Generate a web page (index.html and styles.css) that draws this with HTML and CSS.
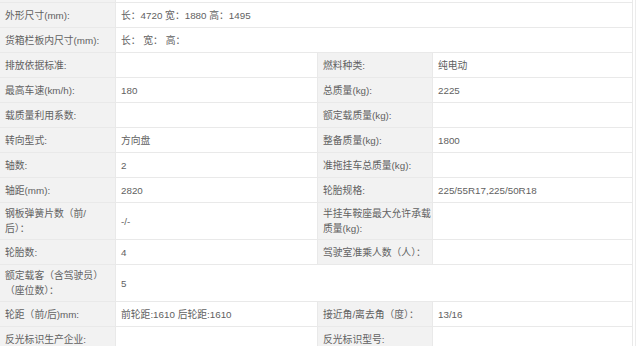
FILE: index.html
```html
<!DOCTYPE html>
<html lang="zh-CN">
<head>
<meta charset="utf-8">
<title>车辆参数</title>
<link rel="stylesheet" href="styles.css">
</head>
<body>
<div class="wrap">
<table class="spec">
  <colgroup>
    <col class="c-label1">
    <col class="c-val1">
    <col class="c-label2">
    <col class="c-val2">
  </colgroup>
  <tbody>
    <tr class="prev"><td class="lab lab1"></td><td class="val" colspan="3"></td></tr>
    <tr><td class="lab lab1">外形尺寸(mm):</td><td class="val" colspan="3">长：4720 宽：1880 高：1495</td></tr>
    <tr><td class="lab lab1">货箱栏板内尺寸(mm):</td><td class="val" colspan="3">长： 宽： 高：</td></tr>
    <tr><td class="lab lab1">排放依据标准:</td><td class="val"></td><td class="lab lab2">燃料种类:</td><td class="val">纯电动</td></tr>
    <tr><td class="lab lab1">最高车速(km/h):</td><td class="val">180</td><td class="lab lab2">总质量(kg):</td><td class="val">2225</td></tr>
    <tr><td class="lab lab1">载质量利用系数:</td><td class="val"></td><td class="lab lab2">额定载质量(kg):</td><td class="val"></td></tr>
    <tr><td class="lab lab1">转向型式:</td><td class="val">方向盘</td><td class="lab lab2">整备质量(kg):</td><td class="val">1800</td></tr>
    <tr><td class="lab lab1">轴数:</td><td class="val">2</td><td class="lab lab2">准拖挂车总质量(kg):</td><td class="val"></td></tr>
    <tr><td class="lab lab1">轴距(mm):</td><td class="val">2820</td><td class="lab lab2">轮胎规格:</td><td class="val">225/55R17,225/50R18</td></tr>
    <tr><td class="lab lab1">钢板弹簧片数（前/后）：</td><td class="val">-/-</td><td class="lab lab2">半挂车鞍座最大允许承载质量(kg):</td><td class="val"></td></tr>
    <tr><td class="lab lab1">轮胎数:</td><td class="val">4</td><td class="lab lab2">驾驶室准乘人数（人）：</td><td class="val"></td></tr>
    <tr><td class="lab lab1">额定载客（含驾驶员）（座位数）：</td><td class="val" colspan="3">5</td></tr>
    <tr><td class="lab lab1">轮距（前/后)mm:</td><td class="val">前轮距:1610 后轮距:1610</td><td class="lab lab2">接近角/离去角（度）：</td><td class="val">13/16</td></tr>
    <tr><td class="lab lab1">反光标识生产企业:</td><td class="val"></td><td class="lab lab2">反光标识型号:</td><td class="val"></td></tr>
  </tbody>
</table>
</div>
</body>
</html>
```

FILE: styles.css
```css
html, body {
  margin: 0;
  padding: 0;
  background: #ffffff;
  overflow: hidden;
}

.wrap {
  width: 636px;
  border-right: 1px solid #ececec;
  box-sizing: border-box;
  margin-top: -22px;
}

.spec {
  width: 633px;
  table-layout: fixed;
  border-collapse: separate;
  border-spacing: 0;
  font-family: "Liberation Sans", "Noto Sans CJK SC", sans-serif;
  font-size: 9.8px;
  line-height: 15px;
  color: #616161;
}

.c-label1 { width: 116px; }
.c-val1 { width: 202px; }
.c-label2 { width: 115px; }
.c-val2 { width: 200px; }

.spec td {
  height: 25px;
  padding: 3px 2px 3px 5px;
  border-right: 1px solid #e9e9e9;
  border-bottom: 1px solid #e9e9e9;
  vertical-align: middle;
  box-sizing: border-box;
}

.spec td.lab {
  background: #f2f2f2;
}

.spec td.lab1 {
  padding-right: 10px;
}

.spec td.lab2 {
  padding-right: 0;
}

.spec td.val {
  background: #ffffff;
}
```
